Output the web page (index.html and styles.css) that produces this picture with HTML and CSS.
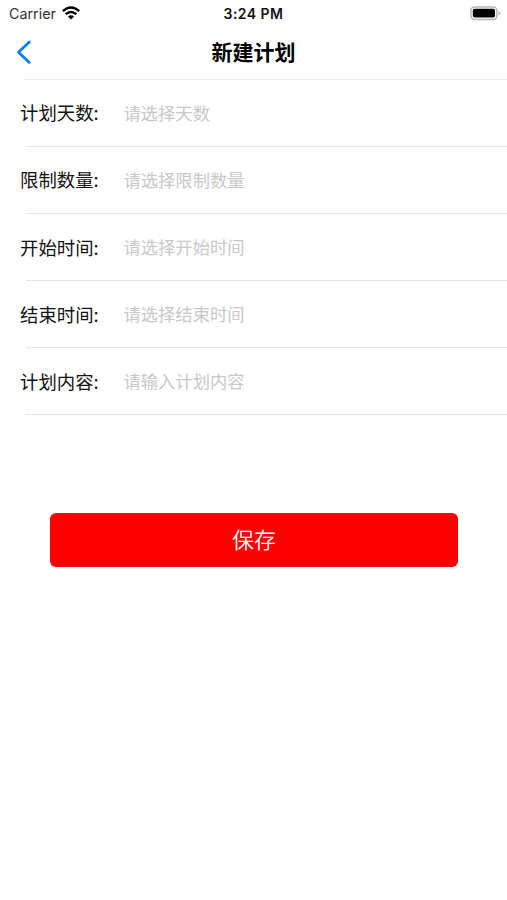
FILE: index.html
```html
<!DOCTYPE html>
<html lang="zh-CN">
<head>
<meta charset="UTF-8">
<title>新建计划</title>
<link rel="stylesheet" href="styles.css">
</head>
<body>
<header class="status">
  <div class="carrier"><span>Carrier</span>
    <svg class="wifi" width="18" height="14" viewBox="0 0 18 14" fill="none" stroke="#000" stroke-width="2.3"><path d="M.8 5.1Q9-2.1 17.2 5.1M3.6 8.2Q9 3.7 14.4 8.2"/><path d="M5.9 10.6Q9 8 12.1 10.6L9 13.6Z" fill="#000" stroke="none"/></svg>
  </div>
  <div class="time">3:24 PM</div>
  <svg class="battery" width="31" height="15" viewBox="0 0 31 15"><rect x=".9" y=".9" width="26" height="12.6" rx="3.8" fill="#fff" stroke="#b5b5b5" stroke-width="1.5"/><rect x="2.8" y="2.8" width="22.2" height="8.8" rx="1.8"/><path d="M28.6 5.1Q30.5 5.8 30.5 7.2T28.6 9.3Z" fill="#b5b5b5"/></svg>
</header>
<nav class="nav">
  <svg class="back" width="16" height="26" viewBox="0 0 16 26" fill="none" stroke="#087bf5" stroke-width="2.7" stroke-linecap="round" stroke-linejoin="round"><path d="M13.3 2L2.5 12.2L13.3 22.4"/></svg>
  <h1 class="title">新建计划</h1>
</nav>
<main class="form">
  <div class="row"><span class="label">计划天数:</span><span class="hint">请选择天数</span></div>
  <div class="row"><span class="label">限制数量:</span><span class="hint">请选择限制数量</span></div>
  <div class="row"><span class="label">开始时间:</span><span class="hint">请选择开始时间</span></div>
  <div class="row"><span class="label">结束时间:</span><span class="hint">请选择结束时间</span></div>
  <div class="row"><span class="label">计划内容:</span><span class="hint">请输入计划内容</span></div>
</main>
<button class="save">保存</button>
</body>
</html>
```
FILE: styles.css
```css
* { box-sizing: border-box; }
body {
  margin: 0;
  height: 900px;
  overflow: hidden;
  background: #fff;
  color: #111;
  font-family: "Inter", "Noto Sans CJK SC", sans-serif;
}
.status {
  display: grid;
  grid-template-columns: 1fr auto 1fr;
  align-items: center;
  height: 27px;
  padding: 0 6px 0 9px;
  font-size: 14.3px;
}
.carrier { display: flex; align-items: center; gap: 6px; color: #333; }
.wifi { margin-top: -2px; }
.time { margin-left: -3px; font-weight: 600; font-size: 14px; letter-spacing: .45px; color: #111; }
.battery { justify-self: end; }
.nav {
  display: grid;
  grid-template-columns: 1fr auto 1fr;
  align-items: center;
  height: 51.6px;
  padding: 0 16px;
}
.title {
  margin: 0;
  padding-bottom: 3px;
  font: 700 21px/30px "Noto Sans CJK SC", sans-serif;
  color: #000;
}
.form { border-top: 1px solid transparent; border-image: linear-gradient(90deg, transparent 25px, #eee 25px) 1; }
.row {
  display: flex;
  align-items: center;
  height: 67.1px;
  padding: 0 0 1.5px 20px;
  background: linear-gradient(#e5e5e5, #e5e5e5) 26px 100% / 100% 1px no-repeat;
  font-family: "Noto Sans CJK SC", sans-serif;
}
.label { width: 103.5px; font-size: 18.4px; color: #111; }
.hint { font-size: 17.3px; color: #c8c8c8; }
.save {
  display: block;
  width: 408px;
  height: 54px;
  margin: 97.9px 0 0 50px;
  padding: 0 0 3px;
  border: 0;
  border-radius: 6px;
  background: #f00;
  color: #fff;
  font: 350 22px "Noto Sans CJK SC", sans-serif;
}
```
